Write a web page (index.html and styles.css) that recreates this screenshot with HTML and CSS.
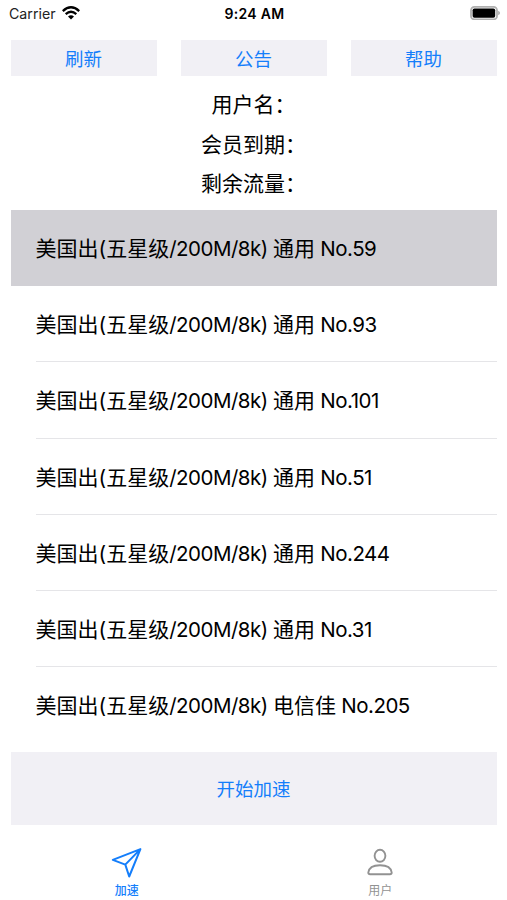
FILE: index.html
```html
<!DOCTYPE html>
<html lang="zh-CN">
<head>
<meta charset="utf-8">
<meta name="viewport" content="width=device-width">
<title>加速</title>
<link rel="stylesheet" href="styles.css">
</head>
<body>
<header class="status">
  <div class="carrier"><span>Carrier</span>
    <svg class="wifi" width="18" height="14" viewBox="0 0 18 14"><g fill="none" stroke="#000" stroke-width="2.3"><path d="M.8 5.1Q9-2.5 17.2 5.1"/><path d="M3.7 8.2Q9 3.4 14.3 8.2"/></g><path d="M6 10.5Q9 7.9 12 10.5L9 13.5Z"/></svg>
  </div>
  <time class="time">9:24 AM</time>
  <svg class="battery" width="30" height="14" viewBox="0 0 30 14"><rect x="1" y=".9" width="26" height="12.4" rx="3.4" fill="#fff" stroke="#b0b0b0" stroke-width="1.8"/><rect x="2.6" y="2.5" width="22.6" height="9.2" rx="1.8"/><path d="M28.2 4.8Q30 5.5 30 7T28.2 9.2Z" fill="#aaa"/></svg>
</header>
<main>
  <nav class="actions"><button>刷新</button><button>公告</button><button>帮助</button></nav>
  <section class="info"><p>用户名：</p><p>会员到期：</p><p>剩余流量：</p></section>
  <ul class="servers">
    <li class="selected"><div>美国出(五星级<span>/200M/8k) </span>通用<span> No.59</span></div></li>
    <li><div>美国出(五星级<span>/200M/8k) </span>通用<span> No.93</span></div></li>
    <li><div>美国出(五星级<span>/200M/8k) </span>通用<span> No.101</span></div></li>
    <li><div>美国出(五星级<span>/200M/8k) </span>通用<span> No.51</span></div></li>
    <li><div>美国出(五星级<span>/200M/8k) </span>通用<span> No.244</span></div></li>
    <li><div>美国出(五星级<span>/200M/8k) </span>通用<span> No.31</span></div></li>
    <li><div>美国出(五星级<span>/200M/8k) </span>电信佳<span> No.205</span></div></li>
  </ul>
  <button class="start">开始加速</button>
</main>
<footer class="tabs">
  <a class="tab active"><svg width="32" height="32" viewBox="0 0 32 32"><path d="M29.4 2.1L1.8 12.9L14.3 17.6L18.2 29.5ZM29.4 2.1L14.3 17.6" fill="none" stroke="currentColor" stroke-width="2" stroke-linejoin="round"/></svg><span>加速</span></a>
  <a class="tab"><svg width="32" height="32" viewBox="0 0 32 32"><g fill="none" stroke="currentColor" stroke-width="1.9"><ellipse cx="16" cy="8.8" rx="5.4" ry="6"/><path d="M6.1 27.2Q4.3 27.2 4.3 25.5C4.9 20.8 9.6 18.2 16 18.2S27.1 20.8 27.7 25.5Q27.7 27.2 25.9 27.2Z"/></g></svg><span>用户</span></a>
</footer>
</body>
</html>
```

FILE: styles.css
```css
* { box-sizing: border-box; }
body {
  margin: 0;
  height: 900px;
  overflow: hidden;
  display: flex;
  flex-direction: column;
  background: #fff;
  color: #000;
  font-family: Inter, "Noto Sans CJK SC", sans-serif;
}
button { border: 0; padding: 0; background: #f1f0f5; color: #147efb; font: inherit; }
.status {
  height: 40px;
  padding: 4px 7px 0 9px;
  display: grid;
  grid-template-columns: 1fr auto 1fr;
  align-items: start;
  line-height: 20px;
}
.carrier { display: flex; gap: 6px; font-size: 14.2px; color: #222; }
.wifi { margin-top: 2px; }
.time { font-size: 14px; font-weight: 600; letter-spacing: .3px; }
.battery { justify-self: end; margin-top: 2px; }
main { padding: 0 10px 0 11px; }
.actions { display: grid; grid-template-columns: repeat(3, 1fr); gap: 24px; }
.actions button { height: 36px; padding-right: 1px; font-size: 18.5px; }
.info { height: 134px; padding: 9px 1px 0 0; text-align: center; font-size: 21px; }
.info p { margin: 0; height: 39.5px; line-height: 39.5px; }
.servers { margin: 0; padding: 0; list-style: none; }
.servers li { height: 76.2px; padding-left: 24.5px; font-size: 21px; white-space: nowrap; }
.servers div { height: 100%; line-height: 77px; border-bottom: 1.5px solid #e5e5e8; }
.servers span { font-size: 20.5px; letter-spacing: -.5px; }
.servers .selected { background: #d1d0d5; }
.servers .selected div, .servers li:last-child div { border: 0; }
.start { display: block; width: 100%; height: 73px; margin-top: 8.6px; padding-right: 1px; font-size: 18.5px; }
.tabs { display: grid; grid-template-columns: 1fr 1fr; padding-top: 22px; }
.tab { display: flex; flex-direction: column; align-items: center; color: #929292; font-size: 12px; line-height: 16px; }
.tab span { margin-top: 4px; }
.active { color: #147efb; font-weight: 500; }
```
